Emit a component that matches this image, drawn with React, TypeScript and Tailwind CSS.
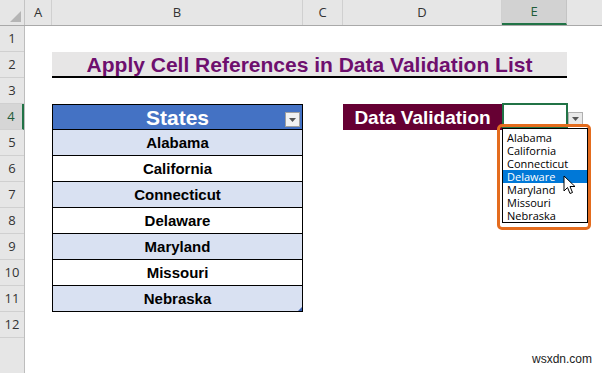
import React from "react";

const states = ["Alabama", "California", "Connecticut", "Delaware", "Maryland", "Missouri", "Nebraska"];

function Tri({ color = "#444" }: { color?: string }) {
  return (
    <svg width="7" height="4" viewBox="0 0 7 4">
      <path d="M0 0 L7 0 L3.5 4 Z" fill={color} />
    </svg>
  );
}

export default function App() {
  const ui = { fontFamily: '"Open Sans", "Noto Sans", sans-serif' };
  const arial = { fontFamily: '"Liberation Sans", Arial, sans-serif' };
  const rowBg = ["bg-[#d9e1f2]", "bg-white", "bg-[#d9e1f2]", "bg-white", "bg-[#d9e1f2]", "bg-white", "bg-[#d9e1f2]"];
  const rowStart = ["row-start-5", "row-start-6", "row-start-7", "row-start-8", "row-start-9", "row-start-10", "row-start-11"];
  return (
    <div className="relative w-[602px] h-[373px] overflow-hidden bg-white" style={ui}>
      {/* Column headers */}
      <div className="flex h-[26px] bg-[#e6e6e6] border-b border-[#a9a9a9] text-[13px] text-[#333]">
        <div className="relative w-[25px] border-r border-[#c4c4c4]">
          <svg className="absolute right-[3px] bottom-[3px]" width="11" height="11" viewBox="0 0 11 11">
            <path d="M11 0 L11 11 L0 11 Z" fill="#b5b5b5" />
          </svg>
        </div>
        <div className="w-[27px] flex items-center justify-center border-r border-[#d0d0d0]">A</div>
        <div className="w-[251px] flex items-center justify-center border-r border-[#d0d0d0]">B</div>
        <div className="w-[40px] flex items-center justify-center border-r border-[#d0d0d0]">C</div>
        <div className="w-[159px] flex items-center justify-center border-r border-[#d0d0d0]">D</div>
        <div className="w-[65px] flex items-center justify-center border-r border-[#c4c4c4] bg-[#d2d2d2] border-b-2 border-b-[#217346] text-[#1e5c3a]">E</div>
        <div className="flex-1" />
      </div>

      <div className="flex h-[347px]">
        {/* Row headers */}
        <div className="w-[25px] flex flex-col bg-[#e6e6e6] border-r border-[#bdbdbd] text-[13px] text-[#333]">
          {[1, 2, 3, 4, 5, 6, 7, 8, 9, 10, 11, 12].map((n) => (
            <div
              key={n}
              className={
                n === 4
                  ? "h-[26px] shrink-0 flex items-center justify-center border-b border-[#d0d0d0] bg-[#d6d6d6] text-[#1e5c3a] border-r-2 border-r-[#217346]"
                  : "h-[26px] shrink-0 flex items-center justify-center border-b border-[#d0d0d0]"
              }
            >
              {n}
            </div>
          ))}
          <div className="flex-1" />
        </div>

        {/* Sheet */}
        <div className="flex-1 grid grid-cols-[27px_251px_40px_159px_65px_1fr] grid-rows-[repeat(13,26px)]" style={arial}>
          {/* Title */}
          <div className="row-start-2 col-start-2 col-span-4 bg-[#e7e6e6] border-b-2 border-black flex items-center justify-center text-[21px] font-bold leading-none text-[#6e0f6e]">
            Apply Cell References in Data Validation List
          </div>

          {/* Table header */}
          <div className="row-start-4 col-start-2 relative bg-[#4472c4] border border-black flex items-center justify-center text-white text-[21px] font-bold leading-none">
            States
            <div className="absolute right-[2px] top-[7px] w-[15px] h-[15px] bg-[#f2f2f2] border border-[#a0a0a0] flex items-center justify-center">
              <Tri color="#555" />
            </div>
          </div>
          {states.map((s, i) => (
            <div
              key={s}
              className={`${rowStart[i]} col-start-2 relative ${rowBg[i]} border-x border-b border-black flex items-center justify-center text-[15px] font-bold leading-none text-black`}
            >
              {s}
              {i === 6 && (
                <svg className="absolute right-0 bottom-0" width="4" height="4" viewBox="0 0 4 4">
                  <path d="M4 0 L4 4 L0 4 Z" fill="#3a5fb0" />
                </svg>
              )}
            </div>
          ))}

          {/* Data Validation label */}
          <div className="row-start-4 col-start-4 bg-[#660033] flex items-center justify-center text-white text-[19px] font-bold leading-none">
            Data Validation
          </div>

          {/* E4 selected cell with dropdown */}
          <div className="row-start-4 col-start-5 relative">
            <div className="absolute left-0 top-[-1px] w-[66px] h-[26px] border-2 border-[#217346]" />
            <div className="absolute left-[66px] top-[8px] w-[15px] h-[14px] bg-[#e9e9e9] border border-[#b0b0b0] flex items-center justify-center">
              <Tri color="#555" />
            </div>
            <div className="absolute left-[-5px] top-[20px] w-[94px] h-[106px] border-[3px] border-[#e46c1e] rounded-[5px]" />
            <div className="absolute left-0 top-[24px] w-[86px] h-[95px] bg-white border border-black pt-[2px]" style={ui}>
              {states.map((s) => (
                <div
                  key={s}
                  className={
                    s === "Delaware"
                      ? "h-[13px] pl-[4px] text-[11px] leading-[13px] bg-[#0078d7] text-white"
                      : "h-[13px] pl-[4px] text-[11px] leading-[13px] text-black"
                  }
                >
                  {s}
                </div>
              ))}
            </div>
            <svg className="absolute left-[61px] top-[71px]" width="14" height="21" viewBox="0 0 14 21">
              <path
                d="M1 1 L1 16 L4.5 12.5 L7 18.5 L9.5 17.5 L7 11.5 L12 11.5 Z"
                fill="white"
                stroke="black"
                strokeWidth="1"
                strokeLinejoin="round"
              />
            </svg>
          </div>
        </div>
      </div>

      <div className="absolute right-[10px] bottom-[5px] text-[12px] text-[#222]" style={arial}>
        wsxdn.com
      </div>
    </div>
  );
}
